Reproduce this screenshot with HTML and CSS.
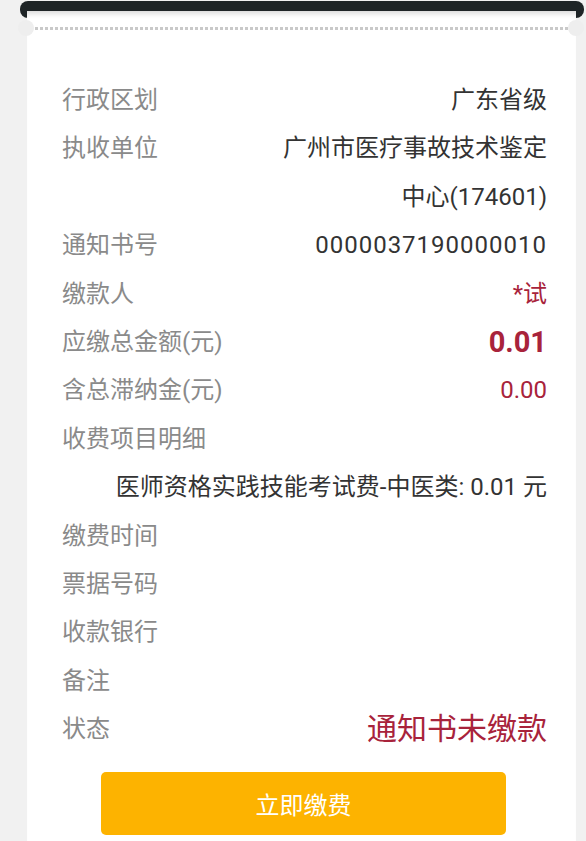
FILE: index.html
```html
<!DOCTYPE html>
<html lang="zh-CN">
<head>
  <meta charset="UTF-8" />
  <meta name="viewport" content="width=device-width, initial-scale=1.0"/>
  <title>缴款通知书</title>
  <link rel="stylesheet" href="styles.css">
</head>
<body>
<div class="slot"></div>
<div class="ticket">
    <div class="tear"></div>

    <div class="info">
        <div class="row"><span class="label">行政区划</span><span class="value">广东省级</span></div>
        <div class="row"><span class="label">执收单位</span><span class="value">广州市医疗事故技术鉴定中心(174601)</span></div>
        <div class="row"><span class="label">通知书号</span><span class="value number">0000037190000010</span></div>
        <div class="row"><span class="label">缴款人</span><span class="value red">*试</span></div>
        <div class="row"><span class="label">应缴总金额(元)</span><span class="value red amount">0.01</span></div>
        <div class="row"><span class="label">含总滞纳金(元)</span><span class="value red">0.00</span></div>
        <div class="row"><span class="label">收费项目明细</span></div>
        <div class="detail">医师资格实践技能考试费-中医类: 0.01 元</div>
        <div class="row"><span class="label">缴费时间</span></div>
        <div class="row"><span class="label">票据号码</span></div>
        <div class="row"><span class="label">收款银行</span></div>
        <div class="row"><span class="label">备注</span></div>
        <div class="row"><span class="label">状态</span><span class="value red status">通知书未缴款</span></div>
    </div>

    <button class="button" onclick="alert('立即缴费')">立即缴费</button>
</div>
</body>
</html>
```

FILE: styles.css
```css
body {
  margin: 0;
  background-color: #f1f1f1;
  font-family: Roboto, "Noto Sans CJK SC", sans-serif;
  color: #333;
}

.slot {
  height: 17px;
  margin: 1px 2px 0 20px;
  border-radius: 8px;
  background-color: #1e2426;
}

.ticket {
  position: relative;
  margin: -7px 10px 0 27px;
  padding: 0 29px 6px 35px;
  background-color: #fff;
  box-shadow: inset 0 7px 6px -5px rgba(0,0,0,0.18);
  min-height: 830px;
  box-sizing: border-box;
}

/* dashed tear line with notches on both edges */
.tear {
  position: relative;
  height: 3px;
  margin: 0 -22px 0 -27px;
  top: 16px;
  background: repeating-linear-gradient(90deg, #c9c9c9 0 3px, transparent 3px 5px);
}
.tear::before,
.tear::after {
  content: "";
  position: absolute;
  top: -7px;
  width: 16px;
  height: 16px;
  border-radius: 50%;
  background-color: #eee;
}
.tear::before { left: -17px; }
.tear::after { right: -15px; }

.info {
  padding-top: 62px;
  font-size: 24px;
  line-height: 48.4px;
}

.row {
  display: flex;
  justify-content: space-between;
  align-items: flex-start;
}

.label {
  color: #8a8a8a;
  white-space: nowrap;
}

.value {
  max-width: 276px;
  text-align: right;
  margin-left: auto;
}

.number { letter-spacing: 1px; }

.red { color: #a8233b; }

.amount {
  font-size: 29px;
  font-weight: bold;
}

.status { font-size: 30px; }

.detail {
  text-align: right;
}

.button {
  display: block;
  width: 405px;
  height: 63px;
  margin: 18px 0 0 39px;
  border: none;
  border-radius: 5px;
  background-color: #fdb300;
  color: #fff;
  font-family: Roboto, "Noto Sans CJK SC", sans-serif;
  font-size: 24px;
  cursor: pointer;
}
```
